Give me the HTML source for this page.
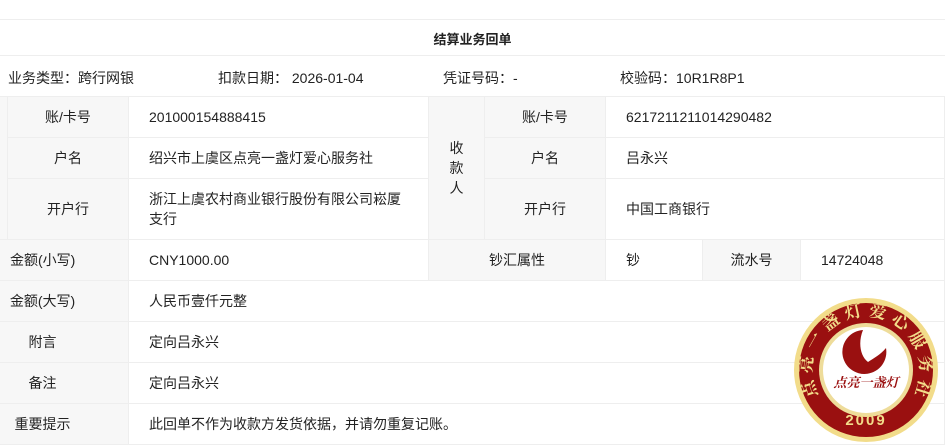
<!DOCTYPE html><html><head><meta charset="utf-8"><style>
*{margin:0;padding:0;box-sizing:border-box}
body{width:945px;height:442px;overflow:hidden;background:#fff;font-family:"Liberation Sans","Noto Sans CJK SC",sans-serif;font-size:14px;color:#222;position:relative}
.c{position:absolute;display:flex;align-items:center;border-right:1px solid #eee;border-bottom:1px solid #eee}
.g{background:#f7f7f7}
.ctr{justify-content:center}
.p{padding-left:20px}
.h{position:absolute;left:0;width:945px;height:1px;background:#eee}
.t{position:absolute;top:68px}
</style></head><body>
<div class="h" style="top:19px"></div>
<div style="position:absolute;top:20px;left:0;width:945px;height:36px;display:flex;align-items:center;justify-content:center;font-weight:bold;font-size:13px">结算业务回单</div>
<div class="h" style="top:55px"></div>
<div class="t" style="left:8px">业务类型：跨行网银</div>
<div class="t" style="left:218px">扣款日期：&nbsp;2026-01-04</div>
<div class="t" style="left:443px">凭证号码：-</div>
<div class="t" style="left:620px">校验码：10R1R8P1</div>
<div class="h" style="top:96px"></div>
<div class="c g" style="left:0;top:97px;width:8px;height:143px"></div>
<div class="c g ctr" style="left:8px;top:97px;width:121px;height:41px">账/卡号</div>
<div class="c g ctr" style="left:8px;top:138px;width:121px;height:41px">户名</div>
<div class="c g ctr" style="left:8px;top:179px;width:121px;height:61px">开户行</div>
<div class="c p" style="left:129px;top:97px;width:300px;height:41px">201000154888415</div>
<div class="c p" style="left:129px;top:138px;width:300px;height:41px">绍兴市上虞区点亮一盏灯爱心服务社</div>
<div class="c p" style="left:129px;top:179px;width:300px;height:61px;line-height:20px">浙江上虞农村商业银行股份有限公司崧厦<br>支行</div>
<div class="c g ctr" style="left:429px;top:97px;width:56px;height:143px;line-height:20px;text-align:center">收<br>款<br>人</div>
<div class="c g ctr" style="left:485px;top:97px;width:121px;height:41px">账/卡号</div>
<div class="c g ctr" style="left:485px;top:138px;width:121px;height:41px">户名</div>
<div class="c g ctr" style="left:485px;top:179px;width:121px;height:61px">开户行</div>
<div class="c p" style="left:606px;top:97px;width:339px;height:41px">6217211211014290482</div>
<div class="c p" style="left:606px;top:138px;width:339px;height:41px">吕永兴</div>
<div class="c p" style="left:606px;top:179px;width:339px;height:61px">中国工商银行</div>
<div class="c g" style="left:0;top:240px;width:129px;height:41px;padding-left:10px">金额(小写)</div>
<div class="c p" style="left:129px;top:240px;width:300px;height:41px">CNY1000.00</div>
<div class="c g ctr" style="left:429px;top:240px;width:177px;height:41px">钞汇属性</div>
<div class="c p" style="left:606px;top:240px;width:97px;height:41px">钞</div>
<div class="c g ctr" style="left:703px;top:240px;width:98px;height:41px">流水号</div>
<div class="c p" style="left:801px;top:240px;width:144px;height:41px">14724048</div>
<div class="c g ctr" style="left:0;top:281px;width:129px;height:41px;padding-right:43px">金额(大写)</div>
<div class="c g ctr" style="left:0;top:322px;width:129px;height:41px;padding-right:43px">附言</div>
<div class="c g ctr" style="left:0;top:363px;width:129px;height:41px;padding-right:43px">备注</div>
<div class="c g ctr" style="left:0;top:404px;width:129px;height:41px;padding-right:43px">重要提示</div>
<div class="c p" style="left:129px;top:281px;width:816px;height:41px">人民币壹仟元整</div>
<div class="c p" style="left:129px;top:322px;width:816px;height:41px">定向吕永兴</div>
<div class="c p" style="left:129px;top:363px;width:816px;height:41px">定向吕永兴</div>
<div class="c p" style="left:129px;top:404px;width:816px;height:41px">此回单不作为收款方发货依据，并请勿重复记账。</div>
<svg style="position:absolute;left:780px;top:270px" width="165" height="172" viewBox="0 0 165 172">
<defs><path id="arc" d="M39 127 A54 54 0 1 1 133 127"/></defs>
<path d="M150 110 A70 70 0 0 1 65 160" fill="none" stroke="#e02020" stroke-width="1.5"/>
<circle cx="86" cy="100" r="72" fill="#f2dc8a"/>
<circle cx="86" cy="100" r="67" fill="#9a1010"/>
<circle cx="86" cy="100" r="47" fill="#eedc9a"/>
<circle cx="86" cy="100" r="43" fill="#fff"/>
<path d="M83 60 A22 22 0 1 0 106 78 C100 85 94 88 88 92 C80 86 78 72 83 60Z" fill="#9a1010"/>
<text x="86" y="117" text-anchor="middle" font-family="Noto Serif CJK SC,serif" font-size="13" fill="#9a1010" font-style="italic" font-weight="bold">点亮一盏灯</text>
<text x="86" y="155" text-anchor="middle" font-family="Liberation Sans" font-weight="bold" font-size="15" fill="#f2dc8a" letter-spacing="2">2009</text>
<text font-family="Noto Serif CJK SC,serif" font-size="17" font-weight="bold" fill="#f2dc8a"><textPath href="#arc" startOffset="2" textLength="220" lengthAdjust="spacing">点亮一盏灯爱心服务社</textPath></text>
</svg>
</body></html>
